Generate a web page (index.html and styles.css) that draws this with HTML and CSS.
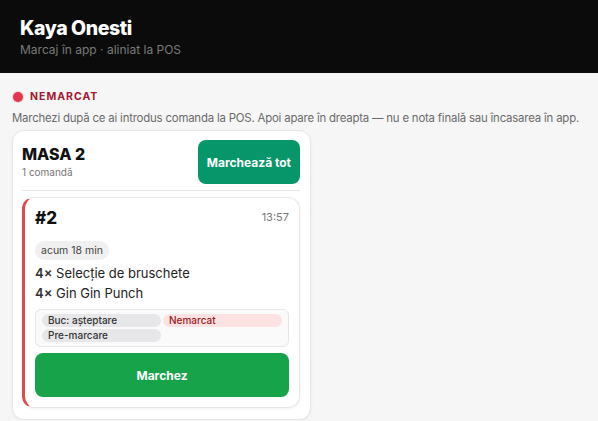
FILE: index.html
```html
<!DOCTYPE html>
<html lang="ro">
<head>
<meta charset="utf-8">
<title>Kaya Onesti</title>
<link rel="stylesheet" href="styles.css">
</head>
<body>
<header class="topbar">
  <h1 class="title">Kaya Onesti</h1>
  <div class="subtitle">Marcaj în app · aliniat la POS</div>
</header>
<main class="main">
  <div class="status">
    <span class="dot"></span>
    <span class="status-label">NEMARCAT</span>
  </div>
  <p class="desc">Marchezi după ce ai introdus comanda la POS. Apoi apare în dreapta — nu e nota finală sau încasarea în app.</p>

  <section class="table-card">
    <div class="table-head">
      <div class="table-info">
        <div class="table-name">MASA 2</div>
        <div class="table-count">1 comandă</div>
      </div>
      <button class="btn btn-all">Marchează tot</button>
    </div>

    <article class="order">
      <div class="order-head">
        <div class="order-num">#2</div>
        <div class="order-time">13:57</div>
      </div>
      <div class="chip-row"><span class="chip">acum 18 min</span></div>
      <ul class="items">
        <li class="item"><span class="qty">4×</span> Selecție de bruschete</li>
        <li class="item"><span class="qty">4×</span> Gin Gin Punch</li>
      </ul>
      <div class="states">
        <span class="state">Buc: așteptare</span>
        <span class="state state-red">Nemarcat</span>
        <span class="state">Pre-marcare</span>
      </div>
      <button class="btn btn-mark">Marchez</button>
    </article>
  </section>
</main>
</body>
</html>
```
FILE: styles.css
```css
* { box-sizing: border-box; }
html, body { margin: 0; padding: 0; }
body {
  font-family: Inter, "Noto Sans", sans-serif;
  background: #f6f6f6;
  color: #111;
}
.topbar {
  background: #0b0b0b;
  height: 73px;
  padding: 16px 20px 0;
}
.title {
  margin: 0;
  font-size: 19.5px;
  line-height: 24px;
  font-weight: 800;
  color: #fff;
  letter-spacing: -0.4px;
}
.subtitle {
  margin-top: 1px;
  font-size: 12px;
  line-height: 18px;
  color: #7a7a7a;
}
.main {
  padding: 17px 12px 0;
}
.status {
  display: flex;
  align-items: center;
  gap: 7px;
  height: 14px;
  padding-left: 1px;
}
.dot {
  width: 10px;
  height: 10px;
  border-radius: 50%;
  background: #e2364c;
  box-shadow: 0 0 0 1px rgba(226, 54, 76, 0.2);
}
.status-label {
  font-size: 10.5px;
  font-weight: 700;
  letter-spacing: 1px;
  color: #a3182f;
  line-height: 14px;
}
.desc {
  margin: 5px 0 3px;
  font-size: 11.4px;
  letter-spacing: -0.19px;
  line-height: 18px;
  color: #6a6a6a;
  white-space: nowrap;
}
.table-card {
  width: 299px;
  background: #fff;
  border: 1px solid #e6e6e6;
  border-radius: 12px;
  padding: 9px 10px 11px 9px;
  box-shadow: 0 1px 3px rgba(0,0,0,0.06);
}
.table-head {
  display: flex;
  justify-content: space-between;
  align-items: flex-start;
  padding-bottom: 6px;
  border-bottom: 1px solid #e6e6e6;
}
.table-info { padding-top: 4px; }
.table-name {
  font-size: 16px;
  line-height: 20px;
  font-weight: 800;
  color: #111;
}
.table-count {
  margin-top: 1px;
  font-size: 10px;
  line-height: 14px;
  color: #777;
}
.btn {
  border: 0;
  font-family: inherit;
  color: #fff;
  font-weight: 700;
  font-size: 12px;
  cursor: pointer;
}
.btn-all {
  height: 44px;
  padding: 0 9px;
  border-radius: 8px;
  background: #079669;
}
.order {
  margin-top: 6px;
  border: 1px solid #e6e6e6;
  border-left: 3px solid #e04a4f;
  border-radius: 12px;
  padding: 10px 10px 10px 10px;
  box-shadow: 0 1px 3px rgba(0,0,0,0.07);
}
.order-head {
  display: flex;
  justify-content: space-between;
  align-items: flex-start;
}
.order-num {
  font-size: 17px;
  line-height: 20px;
  font-weight: 800;
}
.order-time {
  font-size: 11px;
  line-height: 14px;
  color: #777;
  padding-top: 2px;
}
.chip-row { margin-top: 10px; }
.chip {
  display: inline-block;
  height: 19px;
  line-height: 19px;
  padding: 0 6px;
  border-radius: 10px;
  background: #f0f0f0;
  font-size: 10.5px;
  color: #444;
}
.items {
  list-style: none;
  margin: 3px 0 0;
  padding: 0;
}
.item {
  font-size: 13px;
  line-height: 20px;
  color: #222;
}
.qty { font-weight: 600; color: #333; }
.states {
  margin-top: 6px;
  display: grid;
  grid-template-columns: 1fr 1fr;
  gap: 2px;
  padding: 4px 6px;
  background: #fafafa;
  border: 1px solid #e6e6e6;
  border-radius: 6px;
}
.state {
  display: block;
  height: 13px;
  line-height: 13px;
  padding: 0 6px;
  border-radius: 7px;
  background: #e7e7e9;
  font-size: 10px;
  font-weight: 500;
  color: #333;
}
.state-red {
  background: #fde2e4;
  color: #991b1b;
}
.btn-mark {
  display: block;
  width: 100%;
  margin-top: 6px;
  height: 44px;
  border-radius: 8px;
  background: #17a34a;
}
```
